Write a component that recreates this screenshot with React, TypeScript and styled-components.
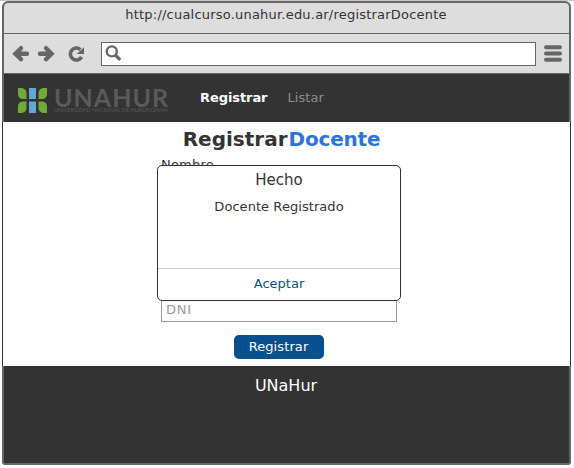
import React from "react";
import styled, { createGlobalStyle } from "styled-components";

const GlobalStyle = createGlobalStyle`
  * { box-sizing: border-box; }
  body {
    margin: 0;
    background: #fdfdfd;
    font-family: "DejaVu Sans", Verdana, sans-serif;
    font-size: 13px;
    color: #333;
    overflow: hidden;
  }
`;

const Page = styled.div`
  height: 468px;
  padding: 1px 3px 3px 2px;
  box-shadow: inset 0 1px #c5c9c5;
`;

const BrowserWindow = styled.div`
  display: flex;
  flex-direction: column;
  height: 464px;
  border: 2px solid #666;
  border-radius: 6px 6px 3px 3px;
  background: #333;
`;

const Label = styled.span<{ $spacing?: number }>`
  display: block;
  white-space: nowrap;
  letter-spacing: ${(p) => p.$spacing ?? 0}px;
`;

const TitleBar = styled.div`
  height: 31px;
  padding: 4px 1px 0 0;
  display: flex;
  justify-content: center;
  line-height: 16px;
  background: #ddd;
  border-bottom: 1px solid #666;
  border-radius: 4px 4px 0 0;
`;

const Toolbar = styled.div`
  height: 40px;
  flex-shrink: 0;
  display: flex;
  align-items: center;
  padding: 0 7px 0 8px;
  background: #ddd;
  border-bottom: 1px solid #666;
`;

const NavIcons = styled.svg`
  width: 74px;
  height: 20px;
  margin-right: 15px;
`;

const AddressField = styled.div`
  width: 435px;
  height: 24px;
  padding: 2px 3px;
  background: #fff;
  border: 1px solid #666;
`;

const MenuIcon = styled.svg`
  width: 18px;
  height: 17px;
  margin-left: 8px;
`;

const SiteHeader = styled.header`
  height: 48px;
  flex-shrink: 0;
  display: flex;
  background: #333;
`;

const Brand = styled.div`
  width: 196px;
  display: flex;
  padding: 14px 0 0 14px;
`;

const BrandMark = styled.svg`
  width: 29px;
  height: 25px;
  margin-right: 7px;
`;

const BrandText = styled.div`
  color: #5a5a5a;
  font-family: Lato, sans-serif;
  white-space: nowrap;
`;

const BrandName = styled.div`
  height: 18px;
  line-height: 18px;
  font-size: 25px;
  font-weight: 700;
  letter-spacing: 1px;
`;

const BrandSub = styled.div`
  margin-top: 2px;
  line-height: 5px;
  font-size: 5.5px;
  color: #585858;
  letter-spacing: 0;
`;

const Nav = styled.nav`
  display: flex;
  gap: 20px;
  padding-top: 16px;
  line-height: 16px;
`;

const NavItem = styled(Label)<{ $active?: boolean }>`
  color: ${(p) => (p.$active ? "#fff" : "#8c8c8c")};
  font-weight: ${(p) => (p.$active ? 700 : 400)};
`;

const Main = styled.main`
  position: relative;
  height: 244px;
  flex-shrink: 0;
  margin: 0 -2px;
  border: solid #333;
  border-width: 0 1px;
  background: #fff;
  display: flex;
  flex-direction: column;
  align-items: center;
`;

const Heading = styled.h1`
  display: flex;
  gap: 1px;
  margin: 4px 0 0;
  padding-right: 10px;
  font-size: 20px;
  line-height: 26px;
`;

const Accent = styled(Label)`
  color: #2f73d9;
`;

const Form = styled.form`
  width: 236px;
  margin: 4px 15px 0 0;
  display: flex;
  flex-direction: column;
`;

const FieldLabel = styled(Label)`
  height: 142px;
  line-height: 18px;
`;

const Field = styled.div`
  height: 24px;
  padding: 3px 4px;
  line-height: 16px;
  color: #999;
  border: 1px solid #999;
`;

const SubmitButton = styled.button`
  width: 90px;
  height: 24px;
  margin: 13px 0 0 73px;
  padding: 0 1px 1px 0;
  border: 0;
  border-radius: 5px;
  background: #07508f;
  color: #fff;
  font: inherit;
  display: flex;
  justify-content: center;
  align-items: center;
`;

const Dialog = styled.section`
  position: absolute;
  left: 154px;
  top: 43px;
  width: 244px;
  height: 136px;
  border: 1px solid #333;
  border-radius: 5px;
  background: #fff;
  display: flex;
  flex-direction: column;
  align-items: center;
`;

const DialogTitle = styled(Label)`
  margin-top: 4px;
  font-size: 15px;
  line-height: 20px;
`;

const DialogBody = styled.div`
  flex: 1;
  padding-top: 9px;
  line-height: 16px;
`;

const DialogAction = styled.div`
  width: 100%;
  height: 32px;
  border-top: 1px solid #ccc;
  color: #07508f;
  display: flex;
  justify-content: center;
  line-height: 29px;
`;

const Footer = styled.footer`
  display: flex;
  justify-content: center;
  padding: 10px 1px 0 0;
  color: #fff;
  font-size: 16px;
  line-height: 20px;
`;

export default function App() {
  return (
    <>
      <GlobalStyle />
      <Page>
        <BrowserWindow>
          <TitleBar>
            <Label $spacing={0.21}>http://cualcurso.unahur.edu.ar/registrarDocente</Label>
          </TitleBar>
          <Toolbar>
            <NavIcons viewBox="0 0 74 20" fill="none" stroke="#666" strokeWidth="4.4" strokeLinecap="round">
              <path d="M15 9.7H5M9 4.2 3.4 9.7 9 15.2M28 9.7h10M34 4.2l5.6 5.5-5.6 5.5" />
              <path d="M69.6 13A6 6 0 1 1 68.4 5.6" strokeWidth="3.6" strokeLinecap="butt" />
              <path d="M72 3.3v6.6h-7.4z" fill="#666" stroke="none" />
            </NavIcons>
            <AddressField>
              <svg width="18" height="18" viewBox="0 0 18 18" fill="none" stroke="#666">
                <circle cx="6.8" cy="6.4" r="5" strokeWidth="2.4" />
                <path d="m10.6 10.3 4.6 4.6" strokeWidth="3.2" />
              </svg>
            </AddressField>
            <MenuIcon viewBox="0 0 18 17" stroke="#666" strokeWidth="4" strokeLinecap="round">
              <path d="M2 2.2h14M2 8.5h14M2 14.8h14" />
            </MenuIcon>
          </Toolbar>
          <SiteHeader>
            <Brand>
              <BrandMark viewBox="0 0 29 25">
                <g fill="#70ac35">
                  <path d="M0 0h4q4.5 1 4.5 5v6H4Q0 10 0 6zM29 0h-4q-4.5 1-4.5 5v6H25q4-1 4-5zM0 25h4q4.5-1 4.5-5v-6.5H4q-4 1-4 5zM29 25h-4q-4.5-1-4.5-5v-6.5H25q4 1 4 5z" />
                </g>
                <path d="M11 0h7v11h-7zM11 13.5h7V25h-7z" fill="#61a8d5" />
              </BrandMark>
              <BrandText>
                <BrandName>UNAHUR</BrandName>
                <BrandSub>UNIVERSIDAD NACIONAL DE HURLINGHAM</BrandSub>
              </BrandText>
            </Brand>
            <Nav>
              <NavItem $active $spacing={-0.08}>Registrar</NavItem>
              <NavItem $spacing={0.08}>Listar</NavItem>
            </Nav>
          </SiteHeader>
          <Main>
            <Heading>
              <Label>Registrar</Label>
              <Accent $spacing={-0.2}>Docente</Accent>
            </Heading>
            <Form>
              <FieldLabel $spacing={0.2}>Nombre</FieldLabel>
              <Field><Label $spacing={0.8}>DNI</Label></Field>
              <SubmitButton type="button"><Label $spacing={0.1}>Registrar</Label></SubmitButton>
            </Form>
            <Dialog role="dialog">
              <DialogTitle>Hecho</DialogTitle>
              <DialogBody><Label $spacing={0.06}>Docente Registrado</Label></DialogBody>
              <DialogAction><Label>Aceptar</Label></DialogAction>
            </Dialog>
          </Main>
          <Footer><Label>UNaHur</Label></Footer>
        </BrowserWindow>
      </Page>
    </>
  );
}
